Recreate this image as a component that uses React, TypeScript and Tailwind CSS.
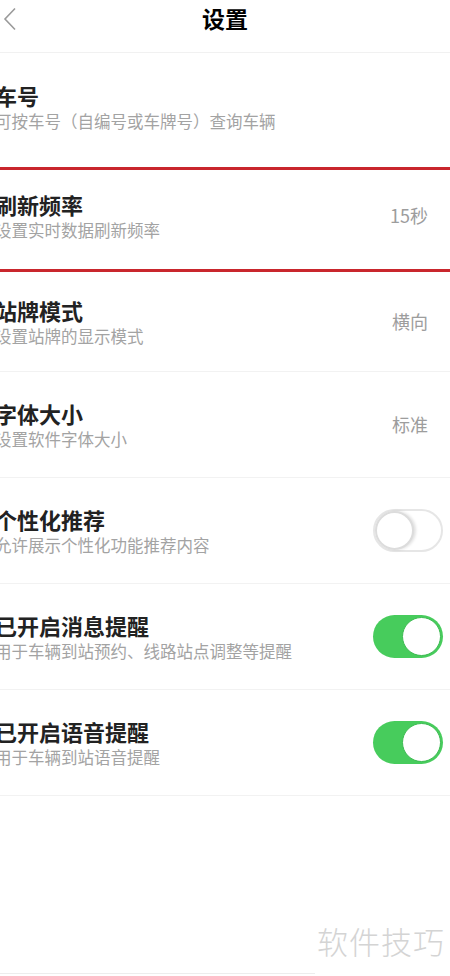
import React from "react";

type Row = {
  title: string;
  desc: string;
  value?: string;
  toggle?: boolean;
  h: string;
};

const rows: Row[] = [
  { title: "站牌模式", desc: "设置站牌的显示模式", value: "横向", h: "h-[100px]" },
  { title: "字体大小", desc: "设置软件字体大小", value: "标准", h: "h-[106px]" },
  { title: "个性化推荐", desc: "允许展示个性化功能推荐内容", toggle: false, h: "h-[106px]" },
  { title: "已开启消息提醒", desc: "用于车辆到站预约、线路站点调整等提醒", toggle: true, h: "h-[106px]" },
  { title: "已开启语音提醒", desc: "用于车辆到站语音提醒", toggle: true, h: "h-[106px]" },
];

function Toggle({ on }: { on: boolean }) {
  if (on) {
    return (
      <div className="flex h-[43px] w-[70px] items-center justify-end rounded-full bg-[#47cc5c] p-[2px]">
        <div className="h-[39px] w-[39px] rounded-full border border-[#3dbb52] bg-white" />
      </div>
    );
  }
  return (
    <div className="flex h-[43px] w-[70px] items-center rounded-full border-2 border-[#e6e6e6] bg-white">
      <div className="h-[39px] w-[39px] rounded-full border-2 border-[#dcdcdc] bg-white shadow-[2px_0_3px_rgba(0,0,0,0.12)]" />
    </div>
  );
}

function Text({ title, desc }: { title: string; desc: string }) {
  return (
    <div className="-ml-[5px] flex flex-col gap-[2px]">
      <div className="text-[22px] font-bold leading-[26px] text-[#222]">{title}</div>
      <div className="text-[16.5px] leading-[22px] text-[#a3a3a3]">{desc}</div>
    </div>
  );
}

export default function App() {
  return (
    <div
      className="relative h-[976px] w-[450px] overflow-hidden bg-white"
      style={{ fontFamily: '"Noto Sans CJK SC", "Noto Sans", sans-serif' }}
    >
      {/* header */}
      <div className="relative flex h-[53px] items-center justify-center border-b border-[#f1f1f1]">
        <svg className="absolute left-[3px] top-[7px]" width="14" height="24" viewBox="0 0 14 24" fill="none">
          <path d="M12 1.5 L2 12 L12 22.5" stroke="#9a9a9a" strokeWidth="1.6" />
        </svg>
        <div className="-mt-[16px] text-[23px] font-bold text-black">设置</div>
      </div>

      <div className="flex h-[114px] items-center pr-[22px]">
        <div className="-mt-[6px]">
          <Text title="车号" desc="可按车号（自编号或车牌号）查询车辆" />
        </div>
      </div>

      <div className="flex h-[105px] items-center justify-between border-y-[3px] border-[#c9262d] pr-[22px]">
        <div className="-mt-[8px]">
          <Text title="刷新频率" desc="设置实时数据刷新频率" />
        </div>
        <span className="-mt-[8px] text-[18px] text-[#9d9d9d]">15秒</span>
      </div>

      {rows.map((r) => (
        <div
          key={r.title}
          className={`flex items-center justify-between border-b border-[#f2f2f2] ${r.h} ${
            r.toggle === undefined ? "pr-[22px]" : "pr-[7px]"
          }`}
        >
          <Text title={r.title} desc={r.desc} />
          {r.toggle === undefined ? (
            <span className="text-[18px] text-[#9d9d9d]">{r.value}</span>
          ) : (
            <Toggle on={r.toggle} />
          )}
        </div>
      ))}

      <div className="absolute bottom-[2px] left-0 h-px w-[315px] bg-[#ededed]" />
      <div className="absolute right-[5px] top-[918px] text-[31px] font-light tracking-[1px] text-[#d4d4d4]">
        软件技巧
      </div>
    </div>
  );
}
